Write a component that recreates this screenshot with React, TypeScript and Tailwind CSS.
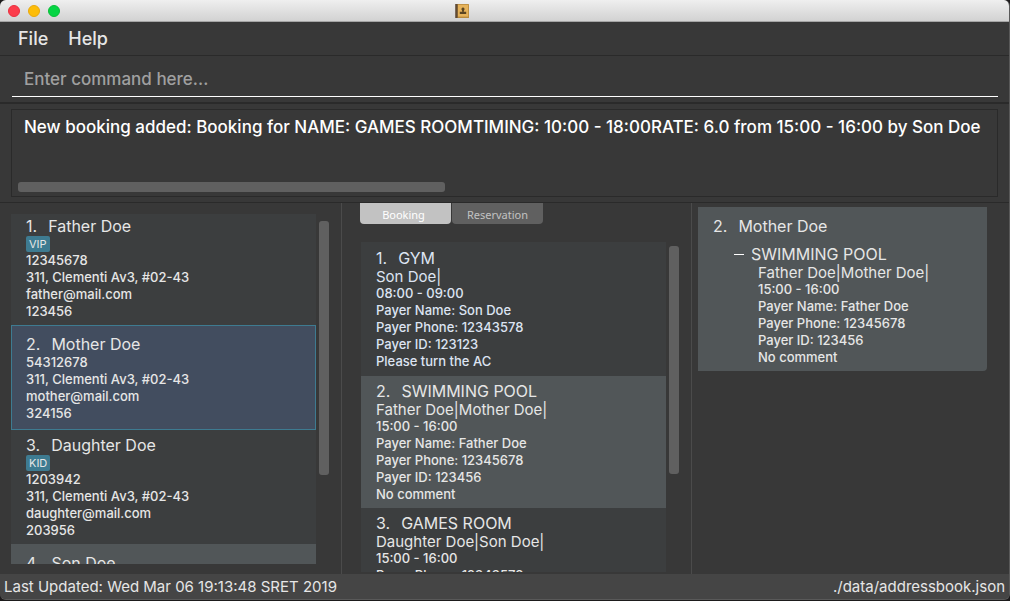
import type { ReactNode } from "react";

type Person = { id: number; name: string; tag?: string; phone: string; address: string; email: string; code: string };
type Booking = { id: number; room: string; members: string; time: string; details: string[] };

const people: Person[] = [
  { id: 1, name: "Father Doe", tag: "VIP", phone: "12345678", address: "311, Clementi Av3, #02-43", email: "father@mail.com", code: "123456" },
  { id: 2, name: "Mother Doe", phone: "54312678", address: "311, Clementi Av3, #02-43", email: "mother@mail.com", code: "324156" },
  { id: 3, name: "Daughter Doe", tag: "KID", phone: "1203942", address: "311, Clementi Av3, #02-43", email: "daughter@mail.com", code: "203956" },
  { id: 4, name: "Son Doe", phone: "12343578", address: "311, Clementi Av3, #02-43", email: "son@mail.com", code: "123123" },
];

const pool: Booking = {
  id: 2,
  room: "SWIMMING POOL",
  members: "Father Doe|Mother Doe|",
  time: "15:00 - 16:00",
  details: ["Payer Name: Father Doe", "Payer Phone: 12345678", "Payer ID: 123456", "No comment"],
};

const bookings: Booking[] = [
  {
    id: 1,
    room: "GYM",
    members: "Son Doe|",
    time: "08:00 - 09:00",
    details: ["Payer Name: Son Doe", "Payer Phone: 12343578", "Payer ID: 123123", "Please turn the AC"],
  },
  pool,
  {
    id: 3,
    room: "GAMES ROOM",
    members: "Daughter Doe|Son Doe|",
    time: "15:00 - 16:00",
    details: ["Payer Phone: 12343578"],
  },
];

function Title({ id, children }: { id: number; children: ReactNode }) {
  return (
    <h2 className="flex gap-[11px] text-base leading-5">
      <span>{id}.</span>
      <span>{children}</span>
    </h2>
  );
}

function Lines({ items }: { items: string[] }) {
  return (
    <>
      {items.map((line) => (
        <p key={line} className="text-[13px] leading-[17px] font-medium">{line}</p>
      ))}
    </>
  );
}

function BookingBody({ booking }: { booking: Booking }) {
  return (
    <>
      <p className="text-[15px] leading-[17px]">{booking.members}</p>
      <Lines items={[booking.time, ...booking.details]} />
    </>
  );
}

function PersonCard({ person, selected }: { person: Person; selected: boolean }) {
  const tone = selected
    ? "bg-[#424d5f] outline outline-1 -outline-offset-1 outline-[#3e7b91]"
    : person.id % 2 === 0
      ? "bg-[#515658]"
      : "bg-[#3c3e3f]";
  return (
    <li className={`flex min-h-[105px] flex-col justify-center px-[15px] py-[5px] ${tone}`}>
      <Title id={person.id}>{person.name}</Title>
      {person.tag && (
        <span className="self-start rounded-xs bg-[#3e7b91] px-[3px] text-[11px] leading-4">{person.tag}</span>
      )}
      <Lines items={[person.phone, person.address, person.email, person.code]} />
    </li>
  );
}

function BookingCard({ booking }: { booking: Booking }) {
  const tone =
    booking.id === 1 ? "min-h-[134px] bg-[#3c3e3f] text-[#dde4f2]" : booking.id % 2 === 0 ? "bg-[#515658]" : "bg-[#3c3e3f]";
  return (
    <li className={`flex flex-col justify-center px-[15px] py-[5px] ${tone}`}>
      <Title id={booking.id}>{booking.room}</Title>
      <BookingBody booking={booking} />
    </li>
  );
}

function AddressBookIcon() {
  return (
    <svg viewBox="0 0 14 14" className="size-3.5" aria-hidden="true">
      <rect x="0" y="0" width="14" height="14" rx="0.6" fill="#b98a3c" />
      <rect x="0" y="0" width="1.2" height="14" fill="#7a6a5c" />
      <rect x="1.2" y="0" width="1.3" height="14" fill="#4f3d30" />
      <rect x="3" y="0.8" width="10.2" height="11.8" fill="#e6b35b" />
      <path d="M8 3.6a1.6 1.6 0 0 1 1.1 2.7L8.7 7.8h2.5v2.3H4.8V7.8h2.5L6.9 6.3A1.6 1.6 0 0 1 8 3.6Z" fill="#5b4522" />
    </svg>
  );
}

export default function App() {
  return (
    <div className="flex h-screen flex-col overflow-hidden bg-[#1d1b1c] font-['Inter',sans-serif] text-[#e6e6e6]">
      <div className="flex min-h-0 flex-1 flex-col overflow-hidden rounded-t-md rounded-b-md border-r border-b border-[#595959] bg-[#383838]">
        <header className="grid h-[22px] shrink-0 grid-cols-3 items-center border-b border-[#a5a5a5] bg-linear-to-b from-[#efefef] to-[#d2d2d2] px-2">
          <div className="flex gap-2">
            <button aria-label="Close" className="size-3 rounded-full border border-[#e8303f] bg-[#fc3d4c]" />
            <button aria-label="Minimize" className="size-3 rounded-full border border-[#e9a80b] bg-[#fdbd09]" />
            <button aria-label="Zoom" className="size-3 rounded-full border border-[#09bd38] bg-[#06d544]" />
          </div>
          <div className="flex justify-center pr-[85px]">
            <AddressBookIcon />
          </div>
        </header>

        <nav className="flex h-[34px] shrink-0 items-center gap-5 border-b border-[#2a2a2a] px-[18px] text-lg font-medium">
          <button>File</button>
          <button>Help</button>
        </nav>

        <div className="shrink-0 border-b-2 border-[#2a2a2a] pt-[7px] pr-[11px] pb-[5px] pl-3">
          <input
            aria-label="Command"
            placeholder="Enter command here..."
            className="block h-[34px] w-full border-b border-white bg-transparent px-3 pb-px text-[17px] font-medium outline-none placeholder:text-[#a0a0a0]"
          />
        </div>

        <section className="shrink-0 border-b border-[#2a2a2a] px-[11px] pt-[5px] pb-[5px]">
          <div className="flex h-[88px] flex-col justify-between overflow-hidden border border-[#2a2a2a] pt-[7px] pr-0 pb-1 pl-1.5">
            <p className="pl-1.5 text-[17px] leading-5 font-medium whitespace-nowrap text-white">
              New booking added: Booking for NAME: GAMES ROOMTIMING: 10:00 - 18:00RATE: 6.0 from 15:00 - 16:00 by Son Doe
            </p>
            <div className="h-2.5 w-[43.6%] rounded-[3px] bg-[#606060]" />
          </div>
        </section>

        <main className="grid min-h-0 flex-1 grid-cols-[341fr_351fr_317fr] grid-rows-[minmax(0,1fr)]">
          <section className="flex gap-[3px] pt-[11px] pr-3 pb-2.5 pl-[11px]" aria-label="Customers">
            <div className="min-w-0 flex-1 overflow-hidden">
              <ul className="-mt-[3px]">
                {people.map((person) => (
                  <PersonCard key={person.id} person={person} selected={person.id === 2} />
                ))}
              </ul>
            </div>
            <div className="w-2.5 pt-[7px]">
              <div className="h-[74%] rounded-[3px] bg-[#606060]" />
            </div>
          </section>

          <section className="flex flex-col border-x border-[#4b4b4b] pr-3 pb-0.5 pl-[18px]" aria-label="Schedule">
            <div role="tablist" className="flex h-[21px] shrink-0 gap-px font-['Noto_Sans',sans-serif] text-[11px]">
              <button role="tab" aria-selected="true" className="w-[91px] rounded-b-sm bg-[#c2c2c2] pt-1 pr-1 text-white">
                Booking
              </button>
              <button role="tab" aria-selected="false" className="w-[91px] rounded-b-sm bg-[#606060] pt-1 text-[#c2c2c2]">
                Reservation
              </button>
            </div>
            <div className="mt-[18px] flex min-h-0 flex-1 gap-[3px] pl-px">
              <ul className="min-w-0 flex-1 overflow-hidden">
                {bookings.map((booking) => (
                  <BookingCard key={booking.id} booking={booking} />
                ))}
              </ul>
              <div className="w-2.5 pt-1">
                <div className="h-[70%] rounded-[3px] bg-[#606060]" />
              </div>
            </div>
          </section>

          <section className="pt-1 pr-[22px] pl-1.5" aria-label="Details">
            <article className="rounded-br-sm bg-[#515658] px-[15px] pt-[9px] pb-[5px]">
              <Title id={2}>Mother Doe</Title>
              <div className="pt-2 pl-[21px]">
                <h3 className="flex items-center gap-[7px] text-base leading-5">
                  <span className="h-px w-2.5 bg-white" />
                  {pool.room}
                </h3>
                <div className="pl-6">
                  <BookingBody booking={pool} />
                </div>
              </div>
            </article>
          </section>
        </main>

        <footer className="flex h-[25px] shrink-0 items-center justify-between bg-[#454545] pt-px pr-1 pl-1 text-[15px]">
          <span>Last Updated: Wed Mar 06 19:13:48 SRET 2019</span>
          <span>./data/addressbook.json</span>
        </footer>
      </div>
      <div className="h-px shrink-0" />
    </div>
  );
}
